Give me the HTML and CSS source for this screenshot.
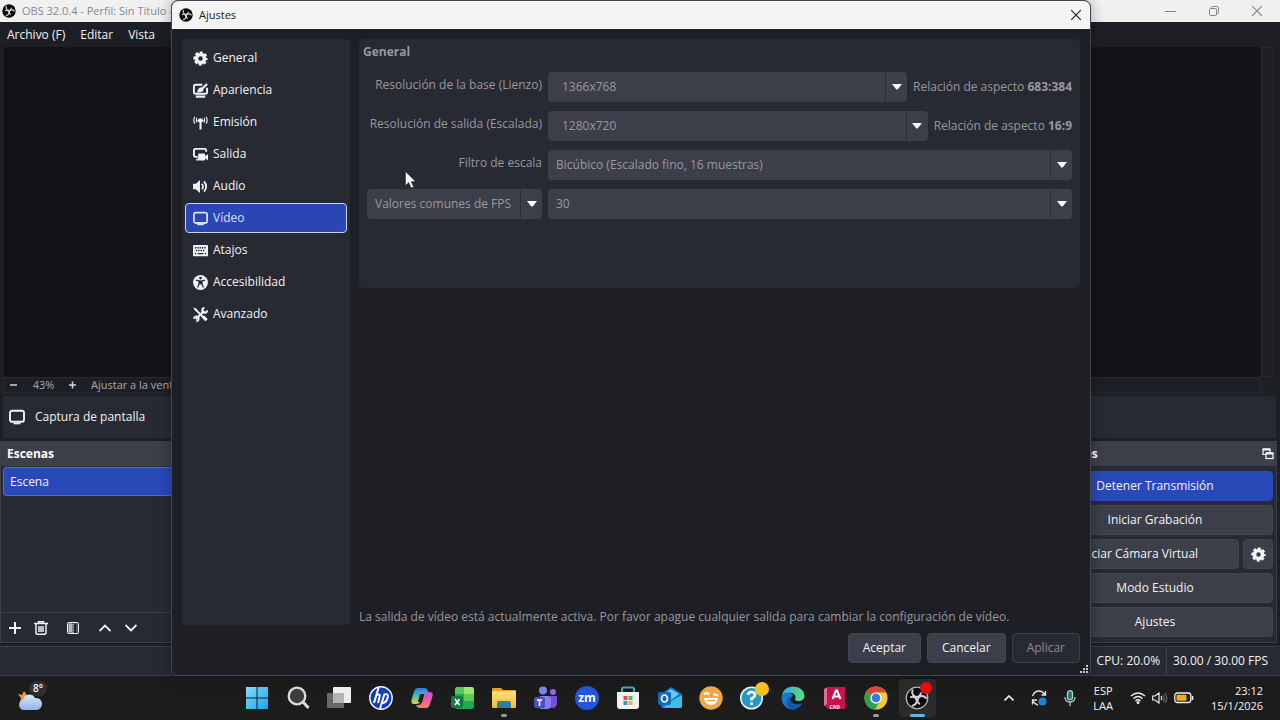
FILE: index.html
```html
<!DOCTYPE html>
<html lang="es">
<head>
<meta charset="utf-8">
<title>OBS - Ajustes</title>
<link rel="stylesheet" href="styles.css">
</head>
<body>
<svg class="sprite" aria-hidden="true">
  <defs>
    <linearGradient id="g-win" x1="0" y1="0" x2="1" y2="1"><stop offset="0" stop-color="#7fdcf8"/><stop offset="1" stop-color="#1fa4ea"/></linearGradient>
    <linearGradient id="g-folder" x1="0" y1="0" x2="0" y2="1"><stop offset="0" stop-color="#ffe07a"/><stop offset="1" stop-color="#f3bd33"/></linearGradient>
    <linearGradient id="g-cop1" x1="0" y1="0" x2="0" y2="1"><stop offset="0" stop-color="#2a7de8"/><stop offset=".5" stop-color="#35c5b4"/><stop offset="1" stop-color="#f0c93c"/></linearGradient>
    <linearGradient id="g-cop2" x1="0" y1="0" x2="0" y2="1"><stop offset="0" stop-color="#b45be8"/><stop offset=".5" stop-color="#ee5a9a"/><stop offset="1" stop-color="#f58a4a"/></linearGradient>
    <linearGradient id="g-edge" x1="0" y1="0" x2="1" y2="0"><stop offset="0" stop-color="#2ba6e6"/><stop offset="1" stop-color="#5fdc7c"/></linearGradient>
    <linearGradient id="g-cloud" x1="0" y1="0" x2="0" y2="1"><stop offset="0" stop-color="#dce9fb"/><stop offset="1" stop-color="#8fb4ea"/></linearGradient>
  </defs>
  <symbol id="obs" viewBox="0 0 24 24">
    <circle cx="12" cy="12" r="11.5" fill="#08080a"/>
    <g fill="none" stroke="#d4d4d6" stroke-width="2" stroke-linecap="round">
      <path id="blade" d="M7.500 4.200C6.200 8.200 9 11.400 12.600 10.800Q15.600 10 15.800 7.200"/>
      <use href="#blade" transform="rotate(120 12 12)"/>
      <use href="#blade" transform="rotate(240 12 12)"/>
    </g>
  </symbol>
  <symbol id="gear" viewBox="0 0 16 16">
    <circle cx="8" cy="8" r="4.300" fill="none" stroke="currentColor" stroke-width="3.800"/>
    <circle cx="8" cy="8" r="6.300" fill="none" stroke="currentColor" stroke-width="2.600" stroke-dasharray="3.150 1.798" stroke-dashoffset="1.570"/>
  </symbol>
  <symbol id="look" viewBox="0 0 16 16">
    <path d="M10 1.800H2.600Q1 1.800 1 3.400V10Q1 11.500 2.600 11.500H13.400Q15 11.500 15 10V5" fill="none" stroke="currentColor" stroke-width="2"/>
    <path d="M3 14.500H13" stroke="currentColor" stroke-width="2.400"/>
    <path d="M4.500 10Q5 5 9 4.500L11 6.500Q11.500 10.500 4.500 10Z" fill="currentColor"/>
    <path d="M9 7L15 1" stroke="currentColor" stroke-width="2.300"/>
  </symbol>
  <symbol id="antenna" viewBox="0 0 16 16">
    <path d="M8 7V15.500M5 5.500Q8 8 11 5.500" fill="none" stroke="currentColor" stroke-width="2.200"/>
    <circle cx="8" cy="5.600" r="2.200" fill="currentColor"/>
    <path d="M4.300 3Q2.800 5.500 4.300 8M11.700 3Q13.200 5.500 11.700 8M2 1.800Q-.3 5.500 2 9.200M14 1.800Q16.300 5.500 14 9.200" fill="none" stroke="currentColor" stroke-width="1.200"/>
  </symbol>
  <symbol id="output" viewBox="0 0 16 16">
    <path d="M14 5V3.500Q14 2 12.500 2H2.500Q1 2 1 3.500V9Q1 10.500 2.500 10.500H5M3.500 13.500H6" fill="none" stroke="currentColor" stroke-width="2"/>
    <rect x="5.500" y="7" width="7.500" height="7.500" rx="1.500" fill="currentColor"/>
    <path d="M12 10.500L16 7.800V14L12 11.500Z" fill="currentColor"/>
  </symbol>
  <symbol id="speaker" viewBox="0 0 16 16">
    <path d="M0 5H3L7.500 1V15L3 11H0Z" fill="currentColor"/>
    <path d="M9.500 5Q11.800 8 9.500 11M11.800 2.500Q16.300 8 11.800 13.500" fill="none" stroke="currentColor" stroke-width="1.900"/>
  </symbol>
  <symbol id="monitor" viewBox="0 0 16 16">
    <rect x="1" y="1.800" width="14" height="11" rx="2" fill="none" stroke="currentColor" stroke-width="1.900"/>
    <path d="M4.500 14.500H11.500" stroke="currentColor" stroke-width="1.600"/>
  </symbol>
  <symbol id="keyboard" viewBox="0 0 16 16">
    <rect y="2" width="16" height="12" rx="1" fill="currentColor"/>
    <path d="M2 5H14M3 8H13" stroke="#272a33" stroke-width="1.500" stroke-dasharray="1.500 1"/>
    <path d="M2 11.300H3.500M5 11.300H11M12.500 11.300H14" stroke="#272a33" stroke-width="1.500"/>
  </symbol>
  <symbol id="access" viewBox="0 0 16 16">
    <circle cx="8" cy="8" r="7.900" fill="currentColor"/>
    <circle cx="8" cy="3.300" r="1.500" fill="#272a33"/>
    <path d="M3 5.500L6.500 6.300V9L5 13.500M13 5.500L9.500 6.300V9L11 13.500" fill="none" stroke="#272a33" stroke-width="1.300"/>
    <path d="M6.200 5.800H9.800V10H6.200Z" fill="#272a33"/>
  </symbol>
  <symbol id="tools" viewBox="0 0 16 16">
    <path d="M2 2L14 14M12 4L3 13" stroke="currentColor" stroke-width="2.200" fill="none"/>
    <path d="M1 .5L4.500 2.500L2.500 4.500L.5 1Z" fill="currentColor"/>
    <path d="M10.500 10L14.500 14" stroke="currentColor" stroke-width="3.400"/>
    <path d="M15 3.500A2.600 2.600 0 1 1 12.300 1M1 12.500A2.500 2.500 0 1 1 3.500 15" stroke="currentColor" stroke-width="2" fill="none"/>
  </symbol>
  <symbol id="popout" viewBox="0 0 12 12">
    <path d="M4 6.500H1V1H8V4" fill="none" stroke="currentColor" stroke-width="1.200"/>
    <path d="M1 1.500H8M4 5.500H11" stroke="currentColor" stroke-width="2"/>
    <rect x="4" y="5" width="7" height="5.500" fill="none" stroke="currentColor" stroke-width="1.200"/>
  </symbol>
  <symbol id="arrow" viewBox="0 0 10 6"><path d="M0 0H10L6 5Q5 6 4 5Z" fill="#fff"/></symbol>
  <symbol id="close" viewBox="0 0 10 10"><path d="M0 0L10 10M10 0L0 10" stroke="currentColor" stroke-width="1.200"/></symbol>
</svg>

<div class="desktop">
  <main class="obs">
    <header class="titlebar">
      <svg class="app-logo"><use href="#obs"/></svg>
      <span class="title">OBS 32.0.4 - Perfil: Sin Título -</span>
      <div class="winctl">
        <button aria-label="Minimizar"><svg width="11" height="10" viewBox="0 0 11 10"><path d="M0 5.500H11" stroke="currentColor"/></svg></button>
        <button aria-label="Restaurar"><svg width="10" height="10" viewBox="0 0 10 10" fill="none" stroke="currentColor"><rect x=".5" y="2.500" width="7" height="7" rx="1"/><path d="M2.500 2V1.500Q2.500.5 3.500.5H8Q9.500.5 9.500 2V6.500Q9.500 7.500 8 7.500"/></svg></button>
        <button aria-label="Cerrar"><svg width="10" height="10"><use href="#close"/></svg></button>
      </div>
    </header>
    <nav class="menubar">
      <button>Archivo (F)</button><button>Editar</button><button>Vista</button><button>Paneles</button>
    </nav>
    <section class="preview" aria-label="Vista previa">
      <div class="canvas"></div>
      <div class="vscroll"></div>
      <div class="zoombar">
        <button aria-label="Alejar"><svg width="8" height="8" viewBox="0 0 8 8"><path d="M0 4H7" stroke="currentColor" stroke-width="1.500"/></svg></button>
        <span class="zoom">43%</span>
        <button aria-label="Acercar"><svg width="8" height="8" viewBox="0 0 8 8"><path d="M0 4H7M3.500.5V7.500" stroke="currentColor" stroke-width="1.500"/></svg></button>
        <span class="fit">Ajustar a la ventana</span>
      </div>
    </section>
    <div class="source">
      <svg width="16" height="16"><use href="#monitor"/></svg>
      <span>Captura de pantalla</span>
    </div>
    <div class="docks">
      <section class="dock scenes">
        <h2>Escenas</h2>
        <ul class="scene-list"><li>Escena</li></ul>
        <div class="scene-tools">
          <button aria-label="Añadir"><svg width="12" height="12" viewBox="0 0 12 12"><path d="M0 6H12M6 0V12" stroke="currentColor" stroke-width="2"/></svg></button>
          <button aria-label="Eliminar"><svg width="14" height="14" viewBox="0 0 14 14" fill="none" stroke="currentColor" stroke-width="1.500"><path d="M0 2.500H14M4.500 2V.7H9.500V2M2 3V12Q2 13.300 3.300 13.300H10.700Q12 13.300 12 12V3M5 5V11M7 5V11M9 5V11"/></svg></button>
          <button aria-label="Filtros"><svg width="12" height="12" viewBox="0 0 12 12"><rect x=".5" y=".5" width="11" height="11" rx="1" fill="#4e515b" stroke="currentColor"/><path d="M1.500 1.500H5V10.500H1.500Z" fill="#b5b6ba"/><path d="M6 2V11" stroke="currentColor" stroke-dasharray="1.500 1"/><path d="M8 2V11" stroke="#222530" stroke-width="2"/></svg></button>
          <button aria-label="Subir"><svg width="12" height="8" viewBox="0 0 12 8"><path d="M.5 7L6 1.500L11.500 7" fill="none" stroke="currentColor" stroke-width="1.800"/></svg></button>
          <button aria-label="Bajar"><svg width="12" height="8" viewBox="0 0 12 8"><path d="M.5 1L6 6.500L11.500 1" fill="none" stroke="currentColor" stroke-width="1.800"/></svg></button>
        </div>
      </section>
      <section class="dock controls">
        <h2>Controles <svg width="12" height="12"><use href="#popout"/></svg></h2>
        <div class="control-list">
          <button class="btn active">Detener Transmisión</button>
          <button class="btn">Iniciar Grabación</button>
          <div class="pair"><button class="btn">Iniciar Cámara Virtual</button><button class="btn square" aria-label="Configurar cámara virtual"><svg width="15" height="15"><use href="#gear"/></svg></button></div>
          <button class="btn">Modo Estudio</button>
          <button class="btn">Ajustes</button>
        </div>
      </section>
    </div>
    <footer class="status"><span>CPU: 20.0%</span><span>30.00 / 30.00 FPS</span></footer>
  </main>

  <section class="dialog" role="dialog" aria-labelledby="dlg-title">
    <header class="dialog-title">
      <svg class="app-logo"><use href="#obs"/></svg>
      <h1 id="dlg-title">Ajustes</h1>
      <button aria-label="Cerrar ajustes"><svg width="10" height="10"><use href="#close"/></svg></button>
    </header>
    <div class="dialog-body">
      <nav class="sidebar">
        <button><svg><use href="#gear"/></svg>General</button>
        <button><svg><use href="#look"/></svg>Apariencia</button>
        <button><svg><use href="#antenna"/></svg>Emisión</button>
        <button><svg><use href="#output"/></svg>Salida</button>
        <button><svg><use href="#speaker"/></svg>Audio</button>
        <button class="selected"><svg><use href="#monitor"/></svg>Vídeo</button>
        <button><svg><use href="#keyboard"/></svg>Atajos</button>
        <button><svg><use href="#access"/></svg>Accesibilidad</button>
        <button><svg><use href="#tools"/></svg>Avanzado</button>
      </nav>
      <div class="page">
        <section class="group">
          <h2>General</h2>
          <div class="form">
            <label for="base">Resolución de la base (Lienzo)</label>
            <div class="field"><div class="combo editable"><select id="base"><option>1366x768</option></select><span class="drop"><svg><use href="#arrow"/></svg></span></div><span>Relación de aspecto <b>683:384</b></span></div>
            <label for="out">Resolución de salida (Escalada)</label>
            <div class="field"><div class="combo editable"><select id="out"><option>1280x720</option></select><span class="drop"><svg><use href="#arrow"/></svg></span></div><span>Relación de aspecto <b>16:9</b></span></div>
            <label for="filter">Filtro de escala</label>
            <div class="combo"><select id="filter"><option>Bicúbico (Escalado fino, 16 muestras)</option></select><span class="drop"><svg><use href="#arrow"/></svg></span></div>
            <div class="combo"><select aria-label="Tipo de FPS"><option>Valores comunes de FPS</option></select><span class="drop"><svg><use href="#arrow"/></svg></span></div>
            <div class="combo"><select aria-label="FPS"><option>30</option></select><span class="drop"><svg><use href="#arrow"/></svg></span></div>
          </div>
        </section>
        <p class="notice">La salida de vídeo está actualmente activa. Por favor apague cualquier salida para cambiar la configuración de vídeo.</p>
      </div>
    </div>
    <footer class="actions">
      <button class="btn">Aceptar</button><button class="btn">Cancelar</button><button class="btn" disabled>Aplicar</button>
    </footer>
    <svg class="grip" width="8" height="8" viewBox="0 0 8 8" fill="#c8c8cc"><path d="M6 0H8V2H6ZM3 3H5V5H3ZM6 3H8V5H6ZM0 6H2V8H0ZM3 6H5V8H3ZM6 6H8V8H6Z"/></svg>
  </section>
  <svg class="cursor" width="11" height="18" viewBox="0 0 11 18"><path d="M.5.5V14.500L3.800 11.500L6.300 17L8.600 16L6.200 10.600H10.500Z" fill="#fff" stroke="#222" stroke-width=".5"/></svg>

  <footer class="taskbar">
    <button class="weather" aria-label="El tiempo">
      <svg width="26" height="20" viewBox="0 0 26 20"><path d="M1 3L5 4L7 0L10 4L15 5L8 14L3 11L4 7Z" fill="#f0953f"/><path d="M6 19A5.500 5.500 0 0 1 6 8.500A6.500 6.500 0 0 1 18 7A6 6 0 0 1 20 19Z" fill="url(#g-cloud)"/></svg>
      <span class="temp">8°</span>
    </button>
    <nav class="apps">
      <button aria-label="Inicio"><svg viewBox="0 0 24 24"><path d="M1 1H11.500V11.500H1ZM12.500 1H23V11.500H12.500ZM1 12.500H11.500V23H1ZM12.500 12.500H23V23H12.500Z" fill="url(#g-win)"/></svg></button>
      <button aria-label="Buscar"><svg viewBox="0 0 24 24"><circle cx="11" cy="10" r="8.300" fill="#3c3d40" stroke="#dcdcdc" stroke-width="2.300"/><path d="M17 16L22.500 22" stroke="#dcdcdc" stroke-width="3"/></svg></button>
      <button aria-label="Vista de tareas"><svg viewBox="0 0 24 24"><rect x="6" y="1" width="18" height="16" rx="1" fill="#eee"/><rect x="0" y="7" width="17" height="15" rx="1" fill="#686868"/><path d="M6 7H17V17H6Z" fill="#b4b4b4"/></svg></button>
      <button aria-label="HP"><svg viewBox="0 0 24 24"><circle cx="12" cy="12" r="11.200" fill="#153bbf" stroke="#f4f6ff" stroke-width="1.400"/><path d="M9.500 2L5 17M7 9.500Q12 7 10.500 11L9 17M15.500 8L11 22.500M15 8.500Q20.500 7.500 18.500 12Q17 17.500 12.800 16.800" fill="none" stroke="#fff" stroke-width="2"/></svg></button>
      <button aria-label="Copilot"><svg viewBox="0 0 24 24"><path d="M8 2H15Q17 2 18 5L19 8H15Q13 8 12 11L10 16Q9 18 6 18H4Q0 18 2 12L4 6Q5 2 8 2Z" fill="url(#g-cop1)"/><path d="M16 22H9Q7 22 6 19H9Q11 19 12 16L14 9Q15 6 18 6H20Q24 6 22 12L20 18Q19 22 16 22Z" fill="url(#g-cop2)"/><path d="M14 8H10L8 16H12Z" fill="#1c1c1c"/></svg></button>
      <button aria-label="Excel"><svg viewBox="0 0 24 24"><rect x="4" y="1" width="19" height="22" rx="2.500" fill="#26a455"/><path d="M4 8V3.500Q4 1 6.500 1H13V8Z" fill="#56c95c"/><path d="M13 1H20.500Q23 1 23 3.500V8H13Z" fill="#9be76b"/><path d="M13 8H23V15H13Z" fill="#60c84c"/><rect y="10" width="12" height="12" rx="2" fill="#137a43"/><path d="M4 13L8.500 19M8.500 13L4 19" stroke="#fff" stroke-width="1.600"/></svg></button>
      <button class="running" aria-label="Explorador de archivos"><svg viewBox="0 0 24 24"><path d="M0 3Q0 2 1 2H9L11 4H23Q24 4 24 5V8H0Z" fill="#e0a32c"/><rect y="5" width="24" height="17" rx="1.500" fill="url(#g-folder)"/><path d="M5 22V17Q5 15 7 15H17Q19 15 19 17V22Z" fill="#2b7f9f"/></svg></button>
      <button aria-label="Teams"><svg viewBox="0 0 24 24"><circle cx="9" cy="4.500" r="4" fill="#7b83e8"/><circle cx="19" cy="6" r="3" fill="#8a6be4"/><path d="M14 10H23V17Q23 22 18 22Q13 22 14 16Z" fill="#7250d4"/><rect x="4" y="10" width="13" height="13" rx="4" fill="#8b7cf0"/><rect y="11" width="11" height="11" rx="2" fill="#4b4ec0"/><path d="M2.800 14H8.200M5.500 14V20" stroke="#fff" stroke-width="1.600"/></svg></button>
      <button aria-label="Zoom"><svg viewBox="0 0 24 24"><circle cx="12" cy="12" r="12" fill="#2454da"/></svg><span class="zm">zm</span></button>
      <button aria-label="Microsoft Store"><svg viewBox="0 0 24 24"><path d="M6 7V3Q6 1.500 7.500 1.500H16.500Q18 1.500 18 3V7" fill="none" stroke="#49a8b8" stroke-width="2"/><path d="M1 6H23V20Q23 23 20 23H4Q1 23 1 20Z" fill="#f1f1f1"/><path d="M7.500 10H11.500V14H7.500Z" fill="#e24b38"/><path d="M12.500 10H16.500V14H12.500Z" fill="#62b45a"/><path d="M7.500 15H11.500V19H7.500Z" fill="#3299d8"/><path d="M12.500 15H16.500V19H12.500Z" fill="#eeb33b"/></svg></button>
      <button aria-label="Outlook"><svg viewBox="0 0 24 24"><path d="M3 8L13 1L24 8V20Q24 22 22 22H5Q3 22 3 20Z" fill="#1276c8"/><path d="M7 7L13 3L21 8L13 14Z" fill="#64c7f4"/><path d="M24 9V20Q24 22 22 22H5L13 15Z" fill="#35c2e6"/><rect y="6" width="13" height="13" rx="2" fill="#106ac0"/><ellipse cx="6.500" cy="12.500" rx="3" ry="3.500" fill="none" stroke="#fff" stroke-width="1.700"/></svg></button>
      <button aria-label="Emoji"><svg viewBox="0 0 24 24"><circle cx="12" cy="12" r="11.700" fill="#f1a844"/><path d="M5 8.500Q7.500 5.500 10 8.500M14 8L19 9.500" fill="none" stroke="#fff" stroke-width="2"/><path d="M5 12H19Q18 19 12 19Q6 19 5 12Z" fill="#fff"/><path d="M8 14H16V15H8Z" fill="#e68b36"/></svg></button>
      <button aria-label="Ayuda"><svg viewBox="0 0 24 24"><circle cx="11.500" cy="12" r="10.800" fill="#2797c6" stroke="#e8f4f8" stroke-width="1.600"/><path d="M8 9Q8 6 11.500 6Q15 6 15 9Q15 11 11.500 12.500V14.500M11.500 16.500V19" fill="none" stroke="#fff" stroke-width="2.600"/></svg><i class="dot yellow"></i></button>
      <button aria-label="Edge"><svg viewBox="0 0 24 24"><path d="M.5 11Q2 .5 12 .5Q23 1 23.500 10Q23 15 18 15Q14 15 14 13Q16 9 11 7Q3 6 .5 11Z" fill="url(#g-edge)"/><path d="M.5 11Q3 5.500 9 7Q12 8 12 10Q8 12 10 16Q13 20 21 17.500Q17 24 10 23.500Q.5 21 .5 11Z" fill="#1b78cc"/><path d="M8 11Q3 20 10 23.500Q17 24 21 17.500Q13 20 10 16Q8.500 13 10 10.500Z" fill="#1558a5"/></svg></button>
      <button aria-label="AutoCAD"><svg viewBox="0 0 24 24"><path d="M1 3L5 1V18L1 20Z" fill="#e0708f"/><path d="M4 1H22V23H5L2 20L4 18Z" fill="#c8124f"/><path d="M9.500 13L13 4.500H14L17.500 13M10.500 10.500H16.500" fill="none" stroke="#fff" stroke-width="2"/></svg><span class="cad">CAD</span></button>
      <button class="running" aria-label="Chrome"><svg viewBox="0 0 24 24"><circle cx="12" cy="12" r="11.500" fill="#f7c934"/><path d="M12 12L2 6Q5 .5 12 .5Q19 .5 22 6.500H12Z" fill="#dc4637"/><path d="M12 12L2 6Q-1 12 2 18Q5.500 23 11 23.500L16.500 14.500Z" fill="#2ba251"/><circle cx="12" cy="12" r="5.700" fill="#fff"/><circle cx="12" cy="12" r="4.400" fill="#3c78e4"/></svg></button>
      <button class="current" aria-label="OBS Studio"><svg viewBox="0 0 24 24"><use href="#obs" width="24" height="24"/><circle cx="12" cy="12" r="10.800" fill="none" stroke="#b8b8ba" stroke-width="1.300"/></svg><i class="dot red"></i></button>
    </nav>
    <div class="tray">
      <svg width="10" height="6" viewBox="0 0 10 6"><path d="M.5 5.500L5 1L9.500 5.500" fill="none" stroke="#eee" stroke-width="1.600"/></svg>
      <svg width="16" height="16" viewBox="0 0 16 16"><path d="M1.500 6Q3.500 1 8 1Q11.500 1 14 4.500M14.500 1V5H10.500M1.500 14.500V10H6M2 11Q4 14.500 7 15" fill="none" stroke="#e4e4e4" stroke-width="1.300"/><circle cx="11.500" cy="11.500" r="4" fill="#1f82da"/></svg>
      <svg width="12" height="16" viewBox="0 0 12 16" fill="none" stroke="#a5d4cd" stroke-width="1.300"><rect x="3.500" y=".7" width="5" height="9" rx="2.500" fill="#33706c"/><path d="M1 7Q1 12 6 12Q11 12 11 7M6 12V16"/></svg>
      <span class="lang">ESP<br>LAA</span>
      <svg width="16" height="12" viewBox="0 0 16 12" fill="none" stroke="#eee" stroke-width="1.400"><path d="M1 4Q8-2 15 4M3.500 6.700Q8 2.500 12.500 6.700M5.500 9Q8 6.500 10.500 9"/><circle cx="8" cy="10.500" r=".8" fill="#eee"/></svg>
      <svg class="vol" width="16" height="12" viewBox="0 0 16 12" fill="none" stroke="#eee" stroke-width="1.200"><path d="M.7 4H3L7 1V11L3 8H.7ZM9 4Q10.500 6 9 8"/><path d="M11 2.500Q13.500 6 11 9.500M13 1Q16.500 6 13 11" stroke="#66686a"/></svg>
      <svg width="20" height="12" viewBox="0 0 20 12"><rect x=".8" y="1" width="16" height="9.500" rx="2.500" fill="none" stroke="#eee" stroke-width="1.300"/><rect x="2.500" y="2.700" width="10" height="6" rx="1" fill="#f2aa1f"/><path d="M18.500 4V8" stroke="#eee" stroke-width="1.600"/></svg>
      <span class="clock">23:12<br>15/1/2026</span>
    </div>
  </footer>
</div>
</body>
</html>
```
FILE: styles.css
```css
* { box-sizing: border-box; }
body { margin: 0; }
button { font: inherit; color: inherit; background: none; border: 0; padding: 0; display: flex; align-items: center; justify-content: center; white-space: nowrap; }
h1, h2, p, ul { margin: 0; padding: 0; font-size: inherit; }
svg { flex: none; }
.sprite { position: absolute; width: 0; height: 0; }
.desktop { position: relative; display: flex; flex-direction: column; height: 100vh; overflow: hidden; font: 12px/16px "Open Sans", "Noto Sans", sans-serif; color: #f2f2f4; background: #1c1c1c; }
.app-logo { width: 14px; height: 14px; }

.obs { flex: 1; min-height: 0; display: flex; flex-direction: column; background: #1e1f24; white-space: nowrap; }
.titlebar { display: flex; align-items: center; gap: 6px; height: 22px; padding-left: 2px; background: #f0f0f1; color: #88888a; font-size: 11px; }
.title { flex: 1; }
.winctl { display: flex; height: 20px; padding-right: 2px; color: #858587; }
.winctl button { width: 43px; }
.menubar { display: flex; gap: 15px; height: 25px; padding: 0 7px; }
.preview { flex: 1; display: grid; grid-template-columns: 1fr 12px; grid-template-rows: 1fr 16px; margin: 0 7px 3px 3px; }
.canvas { background: #121317; border-left: 1px solid #1a1b20; }
.vscroll { border: 1px solid #26272c; }
.zoombar { display: flex; align-items: center; height: 16px; border: 1px solid #292a2f; color: #a7a8ac; font-size: 11px; }
.zoombar button { width: 20px; color: #d5d5d8; }
.zoom { width: 39px; text-align: center; }
.fit { padding-left: 8px; }
.source { display: flex; align-items: center; gap: 10px; height: 42px; margin: 0 4px 3px 3px; padding-left: 6px; background: #272a33; }
.docks { display: flex; justify-content: space-between; height: 202px; background: #1d1f26; }
.dock { display: flex; flex-direction: column; background: #272a33; border: 1px solid #3c3f4a; border-top: 0; }
.dock h2 { display: flex; align-items: center; justify-content: space-between; height: 25px; padding: 0 2px 0 6px; background: #3c3f4a; color: #fff; }
.scenes { width: 250px; }
.scene-list { flex: 1; list-style: none; padding: 1px 2px; }
.scene-list li { height: 29px; padding: 6px; background: #2a49b8; border: 1px solid #526cc8; border-radius: 3px; }
.scene-tools { display: flex; align-items: center; gap: 4px; height: 30px; padding: 0 3px; border-top: 1px solid #3c3f4a; }
.scene-tools button { width: 22px; height: 24px; }
.scene-tools button:nth-child(2), .scene-tools button:nth-child(3) { margin-right: 6px; }
.controls { width: 244px; margin-right: 3px; }
.control-list { display: flex; flex-direction: column; gap: 4px; padding: 5px 3px; }
.pair { display: flex; gap: 4px; }
.pair .btn:first-child { flex: 1; }
.btn { height: 30px; padding: 0 14px; background: #3c3f4a; border: 1px solid #434651; border-radius: 4px; }
.btn.active { background: #2a49b8; border-color: #2a49b8; }
.btn.square { width: 30px; padding: 0; }
.btn:disabled { background: #272a33; border-color: #3c3f4a; color: #8a8b92; }
.status { display: flex; justify-content: flex-end; height: 30px; margin-top: 3px; background: #272a33; border-top: 1px solid #3c3f4a; border-bottom: 1px solid #3c3f4a; }
.status span { padding: 6px; border-right: 1px solid #3c3f4a; }
.status span:last-child { padding-right: 12px; border: 0; }

.dialog { position: absolute; inset: 0 189px 44px 171px; display: flex; flex-direction: column; background: #1e1f24; border: 1px solid #45464b; border-radius: 7px; overflow: hidden; box-shadow: 0 0 14px #0005; }
.dialog-title { display: flex; align-items: center; gap: 6px; height: 28px; padding: 0 9px 0 7px; background: #f4f4f4; color: #222; font-size: 11px; }
.dialog-title h1 { flex: 1; font-weight: 400; }
.dialog-body { flex: 1; display: flex; gap: 9px; padding: 10px 10px 8px; }
.sidebar { display: flex; flex-direction: column; gap: 2px; width: 168px; padding: 4px 3px; background: #272a33; border-radius: 4px; }
.sidebar button { justify-content: flex-start; gap: 5px; height: 30px; padding: 0 7px; border: 1px solid transparent; border-radius: 4px; }
.sidebar svg { width: 15px; height: 15px; }
.sidebar .selected { background: #2a45b4; border-color: #ccd2ee; color: #d8e2ff; }
.page { flex: 1; display: flex; flex-direction: column; justify-content: space-between; color: #97989e; }
.group { min-height: 249px; padding: 5px 8px; background: #272a33; border-radius: 5px; }
.group h2 { margin: 0 -4px 12px; }
.form { display: grid; grid-template-columns: 175px 1fr; gap: 9px 6px; }
.form label { padding-top: 5px; text-align: right; white-space: nowrap; }
.field { display: flex; align-items: center; gap: 6px; }
.field .combo { flex: 1; }
.combo { display: flex; position: relative; height: 30px; background: #3c3f4a; border-radius: 4px; }
.combo select { appearance: none; flex: 1; min-width: 0; padding: 0 22px 0 8px; border: 0; background: none; color: inherit; font: inherit; }
.combo.editable select { padding-left: 14px; }
.drop { position: absolute; inset: 1px 0 1px auto; display: flex; align-items: center; justify-content: center; width: 22px; border-left: 1px solid #292c35; pointer-events: none; }
.drop svg { width: 10px; height: 6px; }
.notice { padding-bottom: 0; }
.actions { display: flex; justify-content: flex-end; gap: 6px; padding: 0 10px 12px; }
.grip { position: absolute; right: 2px; bottom: 2px; }
.cursor { position: absolute; left: 405px; top: 171px; }

.taskbar { display: flex; align-items: center; height: 44px; background: #1c1c1c; }
.weather { position: relative; width: 236px; height: 40px; justify-content: flex-start; padding: 5px 0 0 17px; }
.temp { position: absolute; left: 29px; top: 3px; padding: 0 4px; border-radius: 8px; background: #303034; font-size: 10px; line-height: 15px; font-weight: 600; }
.apps { display: grid; grid-template-columns: repeat(17, 1fr); width: 702px; }
.apps button { position: relative; height: 38px; margin: 0 2px; border-radius: 4px; }
.apps svg { width: 24px; height: 24px; }
.running::after, .current::after { content: ""; position: absolute; bottom: 0; width: 6px; height: 3px; border-radius: 2px; background: #9a9a9a; }
.apps .current { background: #2b2b2b; }
.current::after { width: 15px; background: #5fb8de; }
.zm, .cad { position: absolute; color: #fff; font-weight: 700; }
.zm { font-size: 12px; line-height: 12px; }
.cad { bottom: 6px; font-size: 5px; line-height: 8px; }
.dot { position: absolute; right: 4px; top: 3px; width: 12px; height: 12px; border-radius: 50%; }
.yellow { background: #f8c11d; right: 2px; width: 14px; height: 14px; }
.red { background: #e80b12; }
.tray { display: flex; align-items: center; margin-left: auto; gap: 17px; padding-right: 17px; font-size: 11px; line-height: 15px; }
.lang { text-align: center; }
.vol { margin: 0 -11px; }
.clock { width: 52px; text-align: right; }
```
